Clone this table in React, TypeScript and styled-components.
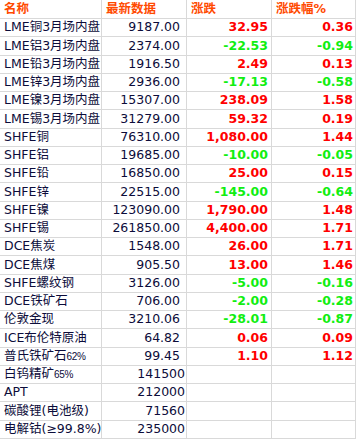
import styled, { createGlobalStyle } from "styled-components";

const GlobalStyle = createGlobalStyle`
  body {
    margin: 0;
    background: #ffffff;
    font-family: "DejaVu Sans", "Noto Sans CJK SC", sans-serif;
  }
`;

type Tone = "up" | "down" | "none";

interface IRow {
  name: string;
  note?: string;
  price: string;
  change: string;
  pct: string;
}

const rows: IRow[] = [
  { name: "LME铜3月场内盘", price: "9187.00", change: "32.95", pct: "0.36" },
  { name: "LME铝3月场内盘", price: "2374.00", change: "-22.53", pct: "-0.94" },
  { name: "LME铅3月场内盘", price: "1916.50", change: "2.49", pct: "0.13" },
  { name: "LME锌3月场内盘", price: "2936.00", change: "-17.13", pct: "-0.58" },
  { name: "LME镍3月场内盘", price: "15307.00", change: "238.09", pct: "1.58" },
  { name: "LME锡3月场内盘", price: "31279.00", change: "59.32", pct: "0.19" },
  { name: "SHFE铜", price: "76310.00", change: "1,080.00", pct: "1.44" },
  { name: "SHFE铝", price: "19685.00", change: "-10.00", pct: "-0.05" },
  { name: "SHFE铅", price: "16850.00", change: "25.00", pct: "0.15" },
  { name: "SHFE锌", price: "22515.00", change: "-145.00", pct: "-0.64" },
  { name: "SHFE镍", price: "123090.00", change: "1,790.00", pct: "1.48" },
  { name: "SHFE锡", price: "261850.00", change: "4,400.00", pct: "1.71" },
  { name: "DCE焦炭", price: "1548.00", change: "26.00", pct: "1.71" },
  { name: "DCE焦煤", price: "905.50", change: "13.00", pct: "1.46" },
  { name: "SHFE螺纹钢", price: "3126.00", change: "-5.00", pct: "-0.16" },
  { name: "DCE铁矿石", price: "706.00", change: "-2.00", pct: "-0.28" },
  { name: "伦敦金现", price: "3210.06", change: "-28.01", pct: "-0.87" },
  { name: "ICE布伦特原油", price: "64.82", change: "0.06", pct: "0.09" },
  { name: "普氏铁矿石", note: "62%", price: "99.45", change: "1.10", pct: "1.12" },
  { name: "白钨精矿", note: "65%", price: "141500", change: "", pct: "" },
  { name: "APT", price: "212000", change: "", pct: "" },
  { name: "碳酸锂(电池级)", price: "71560", change: "", pct: "" },
  { name: "电解钴(≥99.8%)", price: "235000", change: "", pct: "" },
];

// grid lines sit every ~18.26px, like the spreadsheet export
const lineAt = (k: number) => Math.round(18 + 18.26 * k);
const rowHeight = (k: number) => (k === 0 ? lineAt(0) + 1 : lineAt(k) - lineAt(k - 1));

const tone = (v: string): Tone => (!v ? "none" : v.startsWith("-") ? "down" : "up");

const Sheet = styled.div`
  width: 356px;
  font-size: 12.5px;
`;

const Row = styled.div<{ $h: number }>`
  display: grid;
  grid-template-columns: 102px 85px 85px 84px;
  height: ${({ $h }) => $h}px;
`;

const Cell = styled.div<{ $right?: boolean; $pad?: number }>`
  box-sizing: border-box;
  border-right: 1px solid #d9d9d9;
  border-bottom: 1px solid #d9d9d9;
  display: flex;
  align-items: center;
  justify-content: ${({ $right }) => ($right ? "flex-end" : "flex-start")};
  padding: ${({ $right, $pad = 3 }) => ($right ? `0 ${$pad}px 0 0` : "0 0 0 4px")};
  white-space: nowrap;
  overflow: hidden;
  line-height: 1;
`;

const HeadCell = styled(Cell)`
  color: #ff4a00;
  font-weight: bold;
`;

const Name = styled(Cell)`
  color: #0c0c3a;
`;

const Price = styled(Cell)`
  color: #0c0c3a;
`;

const Move = styled(Cell)<{ $tone: Tone }>`
  font-weight: bold;
  color: ${({ $tone }) => ($tone === "down" ? "#11ee11" : "#ff0000")};
`;

const Note = styled.span`
  font-size: 10px;
  font-family: "Liberation Sans", sans-serif;
  letter-spacing: -0.3px;
`;

export default function App() {
  return (
    <>
      <GlobalStyle />
      <Sheet>
        <Row $h={rowHeight(0)}>
          <HeadCell>名称</HeadCell>
          <HeadCell>最新数据</HeadCell>
          <HeadCell>涨跌</HeadCell>
          <HeadCell>涨跌幅%</HeadCell>
        </Row>
        {rows.map((r, i) => (
          <Row key={r.name} $h={rowHeight(i + 1)}>
            <Name>
              {r.name}
              {r.note && <Note>{r.note}</Note>}
            </Name>
            <Price $right $pad={r.price.includes(".") ? 6 : 1}>
              {r.price}
            </Price>
            <Move $right $tone={tone(r.change)}>
              {r.change}
            </Move>
            <Move $right $pad={2} $tone={tone(r.pct)}>
              {r.pct}
            </Move>
          </Row>
        ))}
      </Sheet>
    </>
  );
}
